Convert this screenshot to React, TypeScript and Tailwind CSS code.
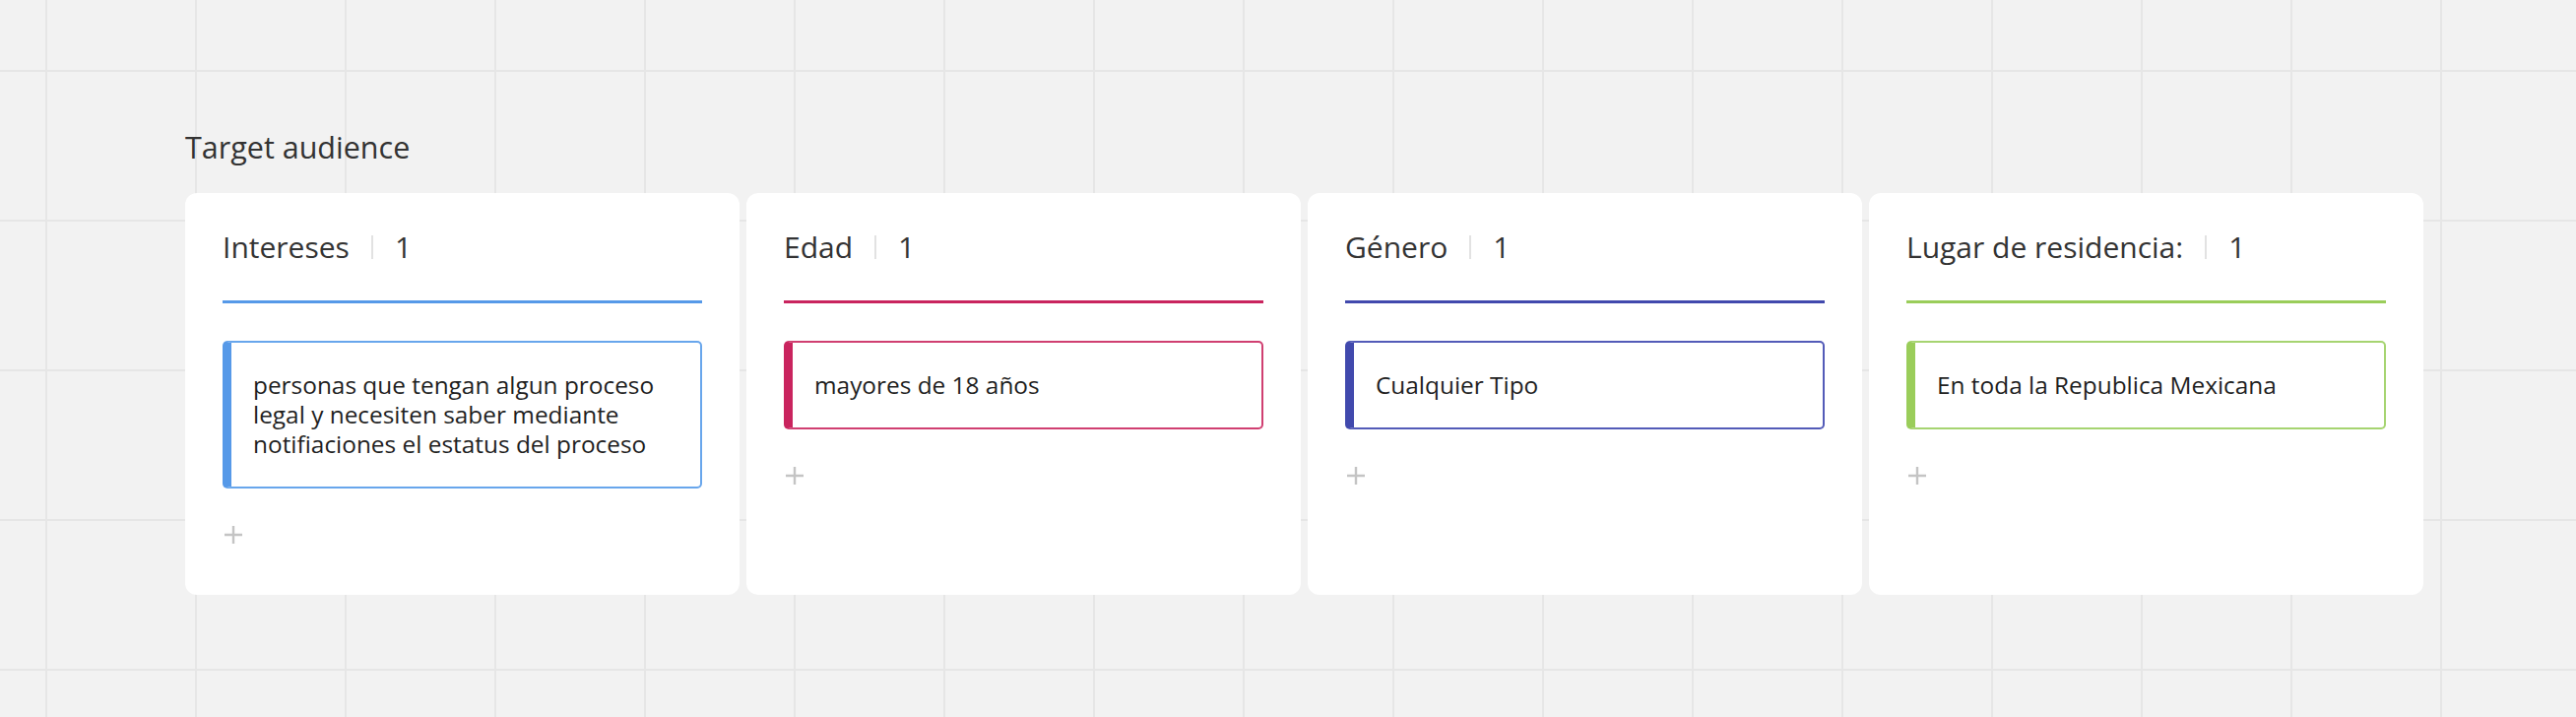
import React from "react";

type Column = {
  title: string;
  count: number;
  line: string;
  accent: string;
  border: string;
  items: string[];
};

const columns: Column[] = [
  {
    title: "Intereses",
    count: 1,
    line: "bg-[#5699e8]",
    accent: "border-l-[#5699e8]",
    border: "border-[#68a6ec]",
    items: ["personas que tengan algun proceso legal y necesiten saber mediante notifiaciones el estatus del proceso"],
  },
  {
    title: "Edad",
    count: 1,
    line: "bg-[#c9245e]",
    accent: "border-l-[#c9245e]",
    border: "border-[#d03f71]",
    items: ["mayores de 18 años"],
  },
  {
    title: "Género",
    count: 1,
    line: "bg-[#4149ad]",
    accent: "border-l-[#4149ad]",
    border: "border-[#535bb8]",
    items: ["Cualquier Tipo"],
  },
  {
    title: "Lugar de residencia:",
    count: 1,
    line: "bg-[#9acd5a]",
    accent: "border-l-[#9acd5a]",
    border: "border-[#a6d471]",
    items: ["En toda la Republica Mexicana"],
  },
];

function PlusIcon() {
  return (
    <svg width="18" height="18" viewBox="0 0 18 18" fill="none" className="ml-[2px]">
      <path d="M9 0V18M0 9H18" stroke="#c4c4c4" strokeWidth="2.4" />
    </svg>
  );
}

function ColumnCard({ col }: { col: Column }) {
  return (
    <div className="w-[563px] shrink-0 rounded-[12px] bg-white px-[38px] pt-[35px] pb-[52px]">
      <div className="flex h-[40px] items-center text-[30px] leading-[40px] text-[#333333]">
        <span>{col.title}</span>
        <span className="mx-[22px] h-[24px] w-[2px] bg-[#e2e2e2]" />
        <span>{col.count}</span>
      </div>
      <div className={`mt-[34px] h-[3px] w-full ${col.line}`} />
      <div className="mt-[38px] flex flex-col gap-[16px]">
        {col.items.map((item) => (
          <div
            key={item}
            className={`rounded-[5px] border-2 border-l-[9px] bg-white py-[28px] pl-[22px] pr-[22px] text-[24.4px] leading-[30px] text-[#1f1f1f] ${col.border} ${col.accent}`}
          >
            {item}
          </div>
        ))}
      </div>
      <div className="mt-[38px] flex">
        <PlusIcon />
      </div>
    </div>
  );
}

export default function App() {
  return (
    <div
      className="h-[728px] w-full overflow-hidden bg-[#f2f2f2] bg-[image:linear-gradient(to_right,#e6e6e6_2px,transparent_2px),linear-gradient(to_bottom,#e6e6e6_2px,transparent_2px)] bg-size-[152px_152px] bg-position-[46px_71px] pl-[188px] pt-[129px]"
      style={{ fontFamily: '"Open Sans", "Noto Sans", sans-serif' }}
    >
      <div className="text-[30.5px] leading-[40px] text-[#333333]">Target audience</div>
      <div className="mt-[27px] flex items-stretch gap-[7px]">
        {columns.map((col) => (
          <ColumnCard key={col.title} col={col} />
        ))}
      </div>
    </div>
  );
}
